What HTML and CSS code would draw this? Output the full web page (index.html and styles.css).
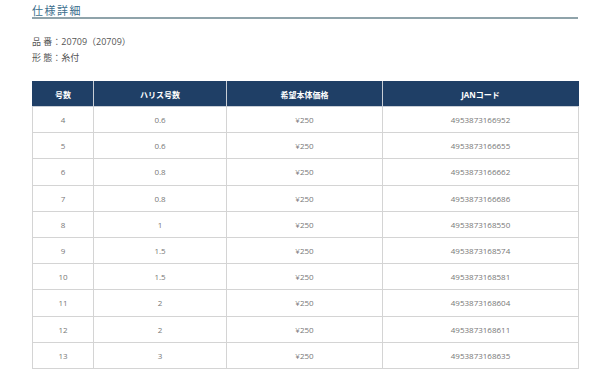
FILE: index.html
```html
<!DOCTYPE html>
<html lang="ja">
<head>
<meta charset="utf-8">
<link rel="stylesheet" href="styles.css">
</head>
<body>
<div class="wrap">
  <h2 class="title">仕様詳細</h2>
  <div class="info">
    <p>品 番：20709（20709）</p>
    <p>形 態：糸付</p>
  </div>
  <table class="spec">
    <colgroup>
      <col class="c1"><col class="c2"><col class="c3"><col class="c4">
    </colgroup>
    <thead>
      <tr><th>号数</th><th>ハリス号数</th><th>希望本体価格</th><th>JANコード</th></tr>
    </thead>
    <tbody>
      <tr><td>4</td><td>0.6</td><td>¥250</td><td>4953873166952</td></tr>
      <tr><td>5</td><td>0.6</td><td>¥250</td><td>4953873166655</td></tr>
      <tr><td>6</td><td>0.8</td><td>¥250</td><td>4953873166662</td></tr>
      <tr><td>7</td><td>0.8</td><td>¥250</td><td>4953873166686</td></tr>
      <tr><td>8</td><td>1</td><td>¥250</td><td>4953873168550</td></tr>
      <tr><td>9</td><td>1.5</td><td>¥250</td><td>4953873168574</td></tr>
      <tr><td>10</td><td>1.5</td><td>¥250</td><td>4953873168581</td></tr>
      <tr><td>11</td><td>2</td><td>¥250</td><td>4953873168604</td></tr>
      <tr><td>12</td><td>2</td><td>¥250</td><td>4953873168611</td></tr>
      <tr><td>13</td><td>3</td><td>¥250</td><td>4953873168635</td></tr>
    </tbody>
  </table>
</div>
</body>
</html>
```
FILE: styles.css
```css
html, body {
  margin: 0;
  padding: 0;
  background: #ffffff;
}
body {
  font-family: "Open Sans", "Noto Sans CJK JP", sans-serif;
  color: #555;
}
.wrap {
  width: 546px;
  margin-left: 32px;
  padding-top: 4px;
}
.title {
  margin: 0;
  font-size: 11px;
  font-weight: normal;
  line-height: 13px;
  letter-spacing: 1.5px;
  color: #3d6f8e;
  border-bottom: 2px solid #8fa3aa;
  padding-bottom: 0;
}
.info {
  margin-top: 15px;
  font-size: 9px;
  color: #555;
}
.info p {
  margin: 0;
  line-height: 16px;
}
.spec {
  margin-top: 15px;
  width: 546px;
  border-collapse: collapse;
  table-layout: fixed;
  font-size: 8px;
}
.c1 { width: 61px; }
.c2 { width: 133px; }
.c3 { width: 156px; }
.c4 { width: 196px; }
.spec th {
  background: #1f3f66;
  color: #fff;
  font-weight: bold;
  height: 24px;
  padding: 0;
  border: 1px solid #c8ced6;
  border-top-color: #1f3f66;
}
.spec th:first-child { border-left-color: #1f3f66; }
.spec th:last-child { border-right-color: #1f3f66; }
.spec td {
  height: 25.2px;
  padding: 0;
  text-align: center;
  color: #777;
  border: 1px solid #d4d4d4;
}
```
